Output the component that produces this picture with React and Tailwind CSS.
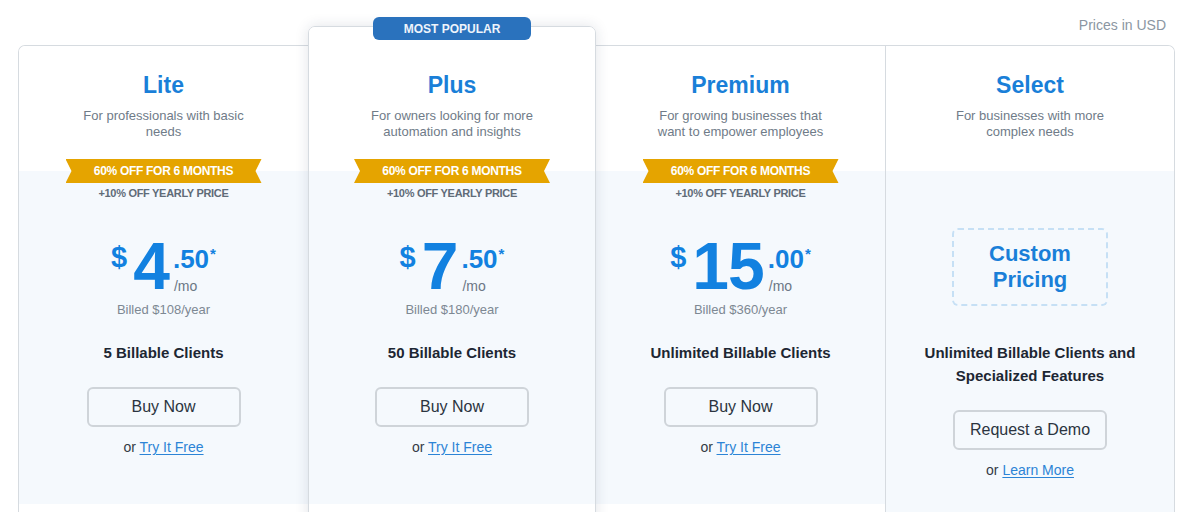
import React from 'react';

const plans = [
    { name: 'Lite', desc: ['For professionals with basic', 'needs'], whole: '4', cents: '.50', billed: 'Billed $108/year', clients: '5 Billable Clients' },
    { name: 'Plus', desc: ['For owners looking for more', 'automation and insights'], whole: '7', cents: '.50', billed: 'Billed $180/year', clients: '50 Billable Clients', popular: true },
    { name: 'Premium', desc: ['For growing businesses that', 'want to empower employees'], whole: '15', cents: '.00', billed: 'Billed $360/year', clients: 'Unlimited Billable Clients' },
];

const Ribbon = () => (
    <div className="-mt-[12px] flex flex-col items-center">
        <div className="w-[196px] h-[24px] bg-[#e5a400] text-white text-[12px] tracking-[-0.3px] font-bold flex items-center justify-center [clip-path:polygon(0_0,100%_0,calc(100%-6px)_50%,100%_100%,0_100%,6px_50%)]">
            60% OFF FOR 6 MONTHS
        </div>
        <div className="mt-[3px] text-[11px] tracking-[-0.3px] leading-[14px] font-bold text-[#5f6b78]">+10% OFF YEARLY PRICE</div>
    </div>
);

const Price = ({ whole, cents }) => (
    <div className="mt-[35px] h-[66px] flex items-start justify-center text-[#1281e0] font-bold">
        <span className="mt-[8px] text-[29px] leading-none mr-[6px]">$</span>
        <span className="mt-[3px] text-[66px] leading-[56px] tracking-[-1px]">{whole}</span>
        <div className="ml-[4px] flex flex-col items-start">
            <div className="mt-[11px] text-[26px] leading-none flex items-start">
                {cents}<span className="ml-[1px] text-[15px] leading-none">*</span>
            </div>
            <span className="mt-[7px] ml-[1px] text-[14px] leading-none font-normal text-[#6b7785]">/mo</span>
        </div>
    </div>
);

const Actions = ({ label, link }) => (
    <>
        <button className="w-[154px] h-[40px] border-2 border-[#cfd4d9] rounded-[6px] text-[16px] text-[#2b3440] bg-transparent">{label}</button>
        <div className="mt-[10px] text-[14px] leading-[20px] text-[#333b45]">
            or <a href="#" className="text-[#2c84d6] underline underline-offset-2">{link}</a>
        </div>
    </>
);

const Header = ({ name, desc, popular }) => (
    <div className={`${popular ? 'h-[144px] pt-[44px]' : 'h-[125px] pt-[25px]'} flex flex-col items-center text-center bg-white`}>
        <h3 className="text-[23px] leading-[28px] font-bold text-[#1a7fd8]">{name}</h3>
        <p className="mt-[9px] text-[13px] leading-[16px] text-[#6f7b88]">
            {desc[0]}<br />{desc[1]}
        </p>
    </div>
);

const PlanColumn = ({ plan, className }) => (
    <div className={`flex flex-col ${className}`}>
        <Header name={plan.name} desc={plan.desc} popular={plan.popular} />
        <div className="h-[333px] bg-[#f5f9fd] flex flex-col items-center">
            <Ribbon />
            <Price whole={plan.whole} cents={plan.cents} />
            <div className="mt-[1px] text-[13px] leading-[15px] text-[#7d8893]">{plan.billed}</div>
            <div className="mt-[26px] text-[15px] leading-[20px] font-bold text-[#1d2733]">{plan.clients}</div>
            <div className="mt-[24px] flex flex-col items-center">
                <Actions label="Buy Now" link="Try It Free" />
            </div>
        </div>
        <div className="h-[60px] bg-white"></div>
    </div>
);

export default function App() {
    return (
        <div className="w-[1200px] h-[512px] overflow-hidden bg-white font-['Liberation_Sans',Arial,sans-serif]">
            <div className="pl-[18px] pr-[25px] pt-[15px]">
                <div className="h-[20px] flex justify-end pr-[9px] text-[14px] leading-[20px] text-[#8b96a2]">Prices in USD</div>
                <div className="mt-[10px] grid grid-cols-[290px_288px_289px_290px] items-start">
                    <PlanColumn plan={plans[0]} className="border-l border-t border-[#d6dbe0] rounded-tl-[7px] overflow-hidden" />
                    <div className="relative -mt-[19px] z-10">
                        <div className="absolute -top-[9px] left-1/2 -translate-x-1/2 w-[158px] h-[23px] rounded-[6px] bg-[#2a72bd] text-[#eef4fb] text-[12px] font-bold flex items-center justify-center">
                            MOST POPULAR
                        </div>
                        <PlanColumn plan={plans[1]} className="border border-[#d6dbe0] rounded-[7px] overflow-hidden shadow-[0_0_14px_rgba(30,50,80,0.13)]" />
                    </div>
                    <PlanColumn plan={plans[2]} className="border-t border-[#d6dbe0]" />
                    <div className="flex flex-col border-l border-t border-r border-[#d6dbe0] rounded-tr-[7px] overflow-hidden">
                        <Header name="Select" desc={['For businesses with more', 'complex needs']} />
                        <div className="h-[400px] bg-[#f5f9fd] flex flex-col items-center text-center">
                            <div className="mt-[57px] w-[156px] h-[78px] border-2 border-dashed border-[#c6e0f5] rounded-[6px] flex items-center justify-center text-[22px] leading-[26px] font-bold text-[#1a7fd8]">
                                Custom<br />Pricing
                            </div>
                            <div className="mt-[35px] text-[15px] leading-[23px] font-bold text-[#1d2733]">
                                Unlimited Billable Clients and<br />Specialized Features
                            </div>
                            <div className="mt-[23px] flex flex-col items-center">
                                <Actions label="Request a Demo" link="Learn More" />
                            </div>
                        </div>
                    </div>
                </div>
            </div>
        </div>
    );
}
